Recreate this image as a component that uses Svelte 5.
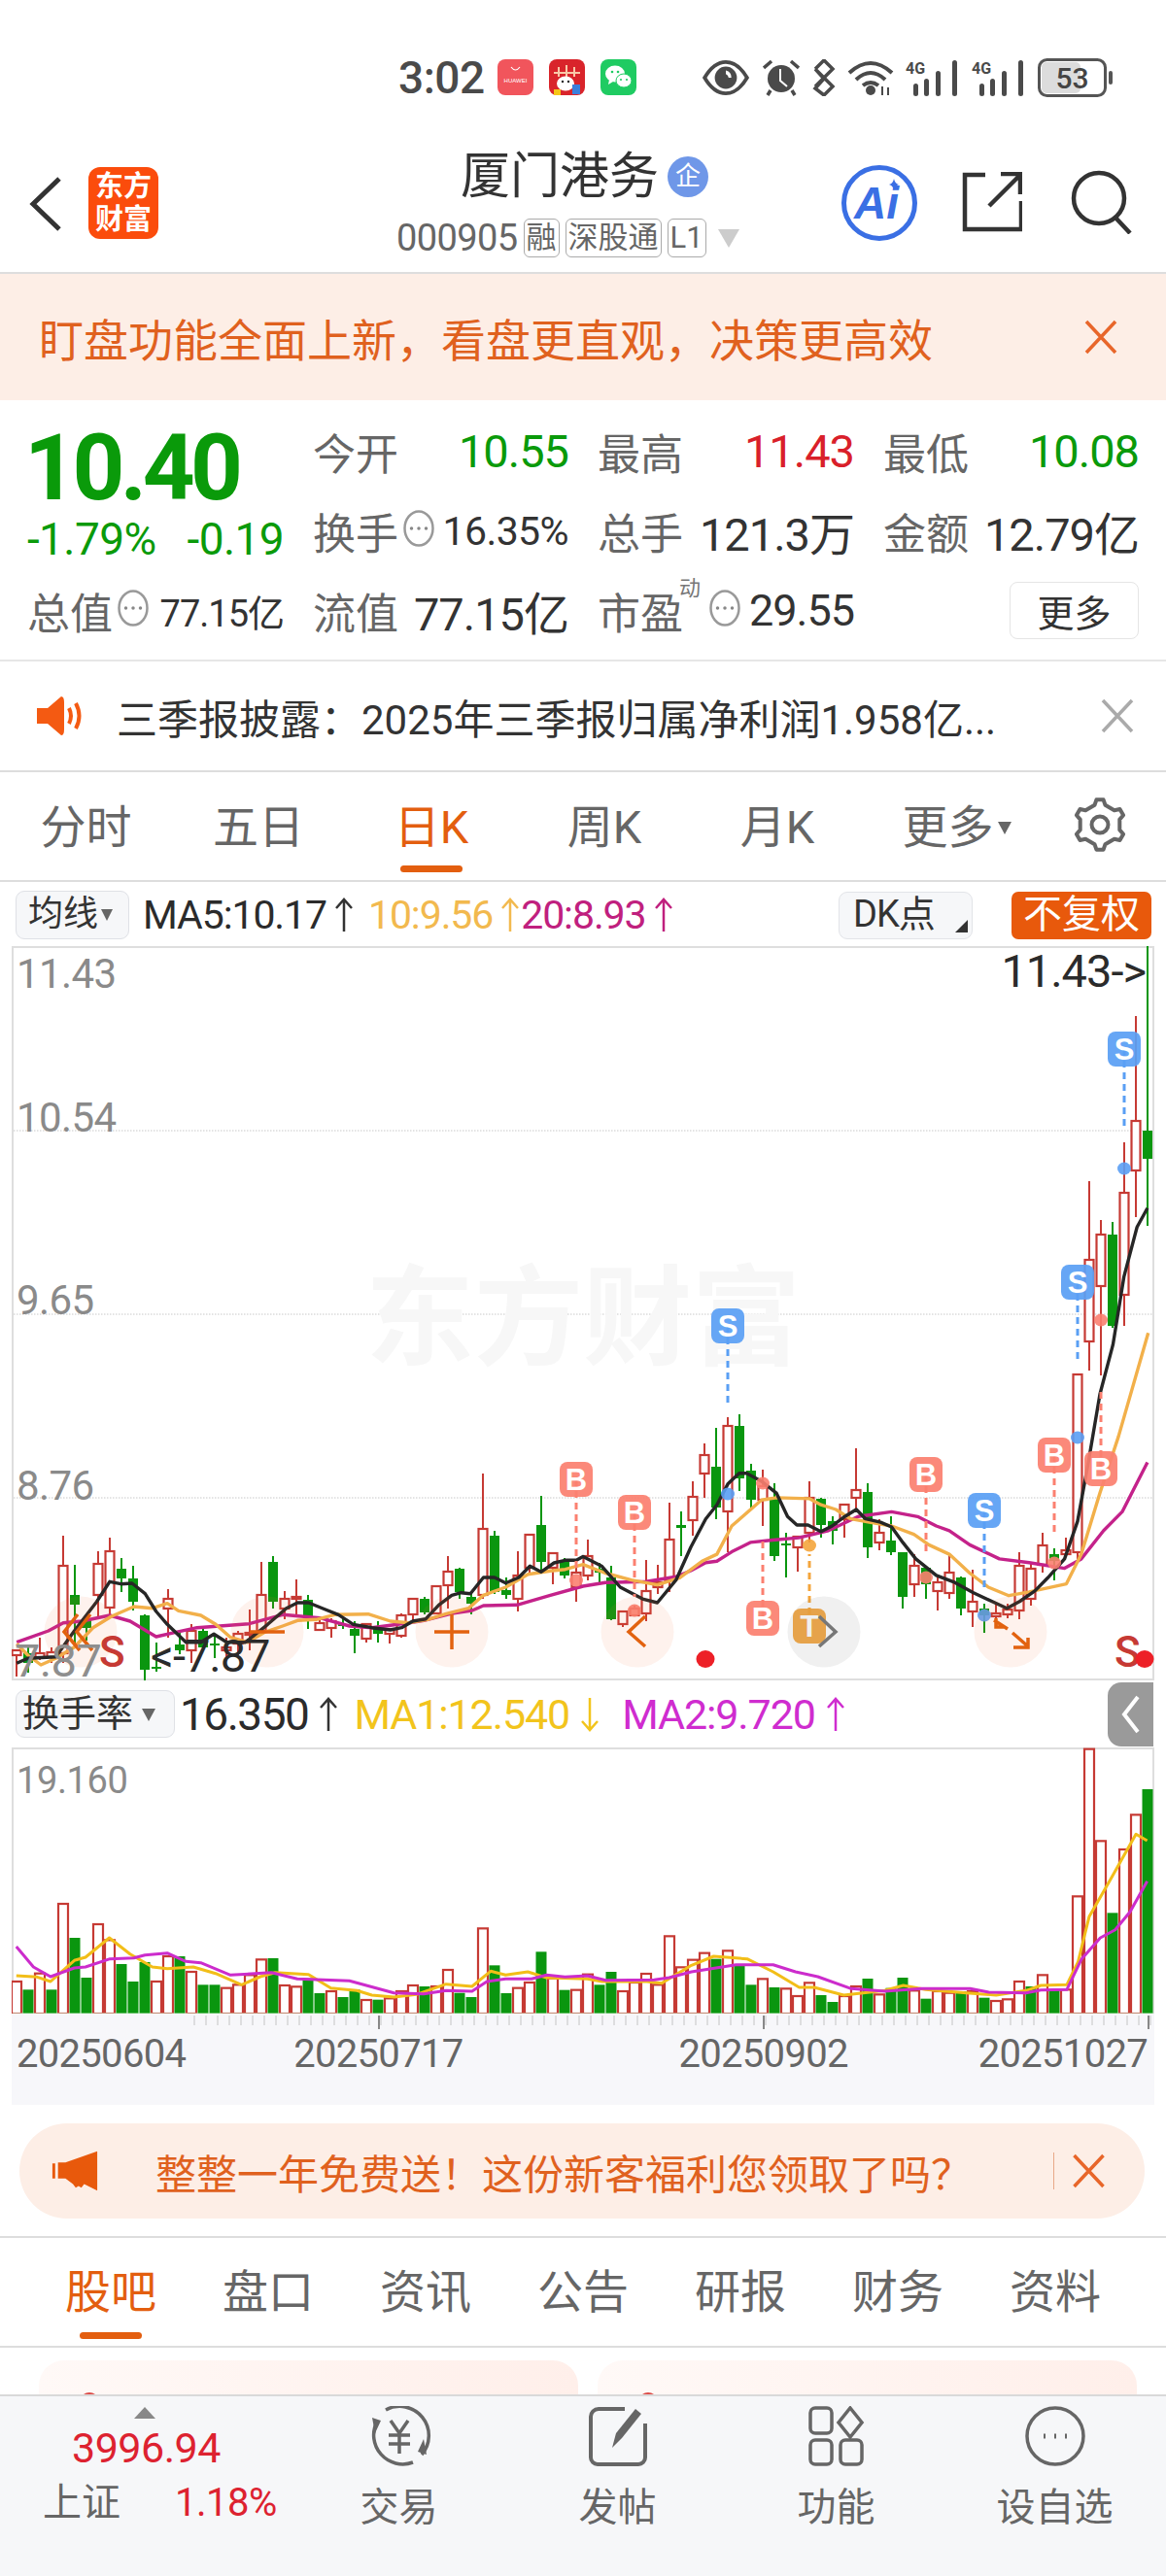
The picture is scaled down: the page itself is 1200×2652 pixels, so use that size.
<script>
  const R = 1, G = 0;
  const candles = [
    [R,1700,1700,1705,1727],[G,1697,1703,1713,1723],[R,1687,1703,1707,1710],[R,1697,1702,1707,1713],
    [R,1582,1613,1703,1713],[G,1612,1643,1653,1697],[G,1663,1667,1677,1690],[R,1598,1611,1643,1668],
    [R,1584,1598,1656,1667],[G,1605,1616,1626,1640],[G,1613,1626,1650,1659],[G,1663,1664,1720,1731],
    [G,1692,1717,1719,1722],[R,1637,1647,1657,1687],[G,1680,1694,1700,1704],[R,1673,1680,1700,1713],
    [G,1678,1680,1697,1700],[G,1683,1693,1695,1708],[R,1687,1697,1700,1707],[R,1680,1683,1693,1705],
    [R,1658,1682,1684,1700],[R,1609,1643,1680,1682],[G,1603,1609,1650,1657],[R,1639,1647,1657,1668],
    [R,1627,1645,1647,1663],[G,1643,1648,1665,1678],[R,1668,1672,1679,1680],[R,1667,1670,1677,1687],
    [G,1668,1673,1675,1678],[G,1670,1678,1685,1703],[R,1672,1673,1688,1692],[G,1670,1678,1683,1692],
    [R,1677,1678,1683,1693],[R,1662,1664,1685,1687],[R,1647,1647,1663,1670],[G,1645,1647,1661,1663],
    [R,1633,1634,1662,1663],[R,1603,1619,1633,1657],[G,1615,1616,1640,1647],[G,1640,1645,1652,1663],
    [R,1518,1575,1643,1647],[G,1577,1582,1640,1642],[G,1625,1638,1643,1647],[R,1598,1623,1647,1660],
    [R,1581,1581,1615,1623],[G,1541,1571,1609,1617],[R,1600,1600,1615,1632],[G,1605,1608,1623,1626],
    [R,1610,1620,1635,1650],[R,1586,1603,1623,1628],[G,1610,1616,1620,1630],[G,1613,1625,1668,1669],
    [R,1659,1660,1673,1676],[R,1654,1657,1664,1665],[R,1607,1639,1662,1670],[R,1612,1630,1635,1642],
    [R,1548,1586,1628,1640],[G,1557,1571,1574,1603],[R,1526,1542,1566,1582],[R,1487,1499,1518,1543],
    [G,1471,1511,1553,1565],[R,1460,1469,1557,1599],[G,1457,1469,1523,1536],[G,1508,1515,1545,1553],
    [R,1514,1531,1545,1572],[G,1528,1543,1603,1608],[G,1579,1590,1592,1625],[R,1582,1583,1594,1619],
    [R,1526,1543,1579,1589],[G,1543,1544,1571,1584],[G,1562,1567,1577,1591],[R,1550,1550,1565,1584],
    [R,1492,1535,1543,1557],[G,1528,1537,1594,1605],[R,1565,1579,1589,1597],[G,1562,1587,1599,1602],
    [G,1599,1599,1645,1657],[R,1601,1613,1632,1645],[G,1613,1615,1632,1647],[R,1625,1630,1639,1659],
    [R,1601,1620,1641,1647],[G,1624,1625,1657,1664],[R,1617,1650,1660,1676],[G,1652,1657,1664,1682],
    [R,1652,1662,1665,1671],[R,1652,1658,1663,1667],[R,1599,1613,1659,1668],[R,1611,1616,1647,1654],
    [R,1579,1592,1612,1620],[G,1595,1601,1608,1628],[R,1584,1597,1601,1604],[R,1416,1416,1599,1606],
    [R,1217,1298,1382,1412],[R,1257,1272,1325,1417],[G,1259,1272,1366,1368],[R,1177,1229,1334,1366],
    [R,1047,1155,1206,1254],[G,975,1165,1194,1263]
  ];
  const cx = (i) => 17 + 12 * i;

  const z8 = (a) => a.map(([x, y]) => [x / 2.613, 1500 + y / 3]);
  const z4 = (a) => a.map(([x, y]) => [600 + x / 2.613, 1000 + y / 2.063]);
  const z5 = (a) => a.map(([x, y]) => [x / 1.307, 1760 + y / 3]);
  const pts = (a) => a.map(([x, y]) => x.toFixed(1) + ',' + y.toFixed(1)).join(' ');

  const ma5 = pts([...z8([[45,640],[75,625],[150,620],[200,540],[260,450],[295,388],[325,395],[355,393],[390,425],[420,480],[450,520],[500,575],[540,575],[575,550],[610,575],[660,575],[720,520],[770,470],[800,453],[830,453],[870,472],[910,490],[950,520],[1000,530],[1050,537],[1080,530],[1110,510],[1145,503],[1180,460],[1215,430],[1240,422],[1265,425],[1300,375],[1330,375],[1360,392],[1395,375],[1425,340],[1455,358],[1490,330],[1520,322],[1550,322]]),
    ...z4([[0,1245],[50,1265],[100,1310],[160,1335],[200,1343],[250,1295],[290,1225],[330,1165],[360,1135],[390,1090],[420,1068],[440,1068],[480,1085],[520,1110],[550,1160],[575,1178],[605,1178],[640,1192],[670,1180],[700,1162],[735,1145],[760,1165],[800,1172],[830,1182],[860,1215],[895,1250],[950,1285],[1000,1300],[1050,1322],[1140,1355],[1175,1340],[1215,1318],[1250,1290],[1295,1250],[1330,1170],[1360,1040],[1390,900],[1425,795],[1455,650],[1490,545],[1518,505]])]);
  const ma10 = pts([...z8([[45,580],[75,615],[110,645],[150,625],[200,590],[250,530],[300,495],[360,465],[410,470],[450,455],[480,478],[540,492],[580,520],[620,560],[665,575],[710,545],[760,525],[800,508],[850,505],[900,490],[990,488],[1050,510],[1100,515],[1150,505],[1200,487],[1260,470],[1300,430],[1360,405],[1420,365],[1480,355],[1520,350]]),
    ...z4([[0,1262],[60,1280],[130,1295],[200,1305],[260,1290],[320,1255],[360,1240],[400,1180],[480,1125],[520,1120],[610,1122],[640,1135],[680,1145],[720,1165],[770,1172],[830,1180],[890,1198],[930,1220],[985,1240],[1040,1280],[1090,1310],[1145,1328],[1200,1320],[1300,1303],[1340,1240],[1390,1110],[1440,990],[1520,770]])]);
  const ma20 = pts([...z8([[45,575],[130,540],[170,515],[220,510],[295,492],[350,510],[420,558],[470,545],[530,530],[670,518],[760,490],[860,500],[940,525],[1000,530],[1100,515],[1140,508],[1220,485],[1270,477],[1300,462],[1390,460],[1480,430]]),
    ...z4([[0,1308],[60,1300],[170,1298],[250,1288],[290,1275],[330,1258],[360,1255],[400,1235],[450,1215],[510,1210],[580,1205],[660,1190],[740,1160],[830,1150],[900,1160],[950,1180],[985,1190],[1040,1220],[1120,1250],[1200,1258],[1295,1270],[1340,1250],[1400,1190],[1450,1150],[1518,1045]])]);

  const gridY = [1165, 1354, 1543];
  const priceLabels = [['11.43',1018],['10.54',1166],['9.65',1354],['8.76',1545]];

  // x, box centre y, tip y, dot y, letter, colour
  const marks = [
    [749,1366,1446,1539,'S','#5a9ff4'],[1013,1556,1640,1664,'S','#5a9ff4'],
    [1109,1321,1402,1481,'S','#5a9ff4'],[1157,1081,1162,1204,'S','#5a9ff4'],
    [593,1524,1617,1628,'B','#fb8070'],[653,1558,1645,1659,'B','#fb8070'],
    [785,1667,1586,1528,'B','#fb8070'],[953,1519,1601,1625,'B','#fb8070'],
    [1085,1499,1582,1610,'B','#fb8070'],[1133,1513,1431,1360,'B','#fb8070'],
    [833,1675,1601,1592,'T','#f4a53c']
  ];
  const rounds = [[83,0],[275,0],[465,0],[656,0],[848,1],[1040,0]];

  const volTops = [840,865,815,865,600,705,828,663,712,786,840,780,840,762,762,810,850,850,860,850,820,772,768,852,856,830,876,870,888,865,897,896,892,870,852,855,855,804,875,888,676,790,876,860,843,748,830,866,866,818,850,810,870,843,816,850,700,796,773,752,770,745,790,850,832,858,862,885,844,882,903,885,855,831,880,860,828,868,893,870,875,870,870,890,900,895,840,855,820,865,865,577,122,406,628,432,325,246];
  const volRed = '1,0,1,0,1,0,0,1,1,0,0,0,1,1,0,1,0,0,1,1,1,1,0,1,1,0,0,1,0,0,1,0,1,1,1,0,1,1,0,0,1,0,0,1,1,0,1,0,1,1,0,0,1,1,1,1,1,1,1,1,0,1,0,0,1,0,1,1,1,0,0,1,1,0,1,0,0,1,0,1,1,0,1,0,1,1,1,0,1,0,1,1,1,1,0,1,1,0'.split(',').map(Number);
  const bars = volTops.map((t, i) => ({ x: cx(i), y: 1760 + t / 3, red: volRed[i] }));
  const volMa1 = pts(z5([[22,822],[50,826],[68,840],[100,775],[115,765],[147,705],[175,755],[205,795],[225,800],[260,795],[290,815],[325,850],[350,825],[370,812],[415,818],[445,860],[480,868],[500,882],[530,888],[560,880],[600,848],[635,855],[660,808],[680,820],[710,810],[735,828],[790,832],[810,840],[870,840],[890,845],[930,790],[960,762],[1005,770],[1040,810],[1075,858],[1095,858],[1135,882],[1190,868],[1215,852],[1245,865],[1300,875],[1340,882],[1380,868],[1400,852],[1435,850],[1450,780],[1465,640],[1495,520],[1528,385],[1543,405]]));
  const volMa2 = pts(z5([[22,732],[45,795],[68,825],[100,798],[115,795],[148,770],[180,767],[195,758],[225,752],[250,778],[270,782],[310,820],[365,812],[400,832],[470,838],[530,875],[570,878],[600,868],[635,870],[655,840],[680,832],[715,832],[735,820],[760,826],[790,822],[815,836],[880,835],[900,828],[930,810],[990,788],[1040,788],[1070,810],[1100,825],[1145,862],[1190,870],[1240,862],[1305,862],[1330,873],[1380,875],[1400,866],[1435,865],[1455,770],[1480,705],[1500,680],[1520,625],[1543,530]]));
  const ticks = Array.from({ length: 83 }, (_, i) => 200 + i * 12);

  const tabs = ['分时','五日','日K','周K','月K'];
  const lowerTabs = ['股吧','盘口','资讯','公告','研报','财务','资料'];
  const gear = (() => {
    const out = [];
    for (let i = 0; i < 6; i++) {
      const a = (i * 60 - 90) * Math.PI / 180;
      [[-15,27],[-8,27],[8,27],[15,27]].forEach(([d, r], j) => {
        const rr = (j === 0 || j === 3) ? 21 : 26;
        const ang = a + d * Math.PI / 180;
        out.push((28 + rr * Math.cos(ang)).toFixed(1) + ',' + (28 + rr * Math.sin(ang)).toFixed(1));
      });
    }
    return out.join(' ');
  })();
  const arrow = 'M11 36V3M3 12l8-9 8 9';
  const arrowDown = 'M11 2v33M3 26l8 9 8-9';
</script>

<div class="page">
  <div class="status">
    <span class="time">3:02</span>
    <svg class="app" viewBox="0 0 37 37"><rect width="37" height="37" rx="8" fill="#f1555c"/><path d="M14 8q4.500 6 9 0" fill="none" stroke="#fff" stroke-width="1.200"/><text x="18.500" y="24" class="tiny">HUAWEI</text></svg>
    <svg class="app" viewBox="0 0 37 37"><rect width="37" height="37" rx="8" fill="#d9242b"/><path d="M5 14h27M10 8v10M18 6v12M26 8v10" stroke="#f8c8a8" stroke-width="2"/><ellipse cx="17" cy="25" rx="9" ry="7.500" fill="#fff"/><circle cx="14" cy="23" r="1.200" fill="#222"/><circle cx="20" cy="23" r="1.200" fill="#222"/><rect x="5" y="31" width="7" height="6" fill="#f5c518"/><rect x="24" y="26" width="8" height="10" fill="#3b7fdd"/></svg>
    <svg class="app" viewBox="0 0 37 37"><rect width="37" height="37" rx="8" fill="#1fcb62"/><ellipse cx="15" cy="15" rx="10" ry="8.500" fill="#fff"/><path d="M9 21l-1 5 5-3z" fill="#fff"/><ellipse cx="24" cy="22" rx="8" ry="7" fill="#fff" stroke="#1fcb62"/><circle cx="12" cy="13" r="1.300" fill="#1fcb62"/><circle cx="18" cy="13" r="1.300" fill="#1fcb62"/><circle cx="21" cy="21" r="1.100" fill="#1fcb62"/><circle cx="27" cy="21" r="1.100" fill="#1fcb62"/></svg>
    <svg class="s eye" viewBox="0 0 50 40"><path d="M2 20Q12 3 25 3t23 17Q38 37 25 37T2 20z" fill="none" stroke="#4a4a4a" stroke-width="4"/><circle cx="25" cy="20" r="12" fill="#4a4a4a"/><path d="M25 12a8 8 0 0 1 6 8h-3a5 5 0 0 0-3-4z" fill="#fff"/></svg>
    <svg class="s alarm" viewBox="0 0 38 38"><circle cx="19" cy="20" r="14" fill="#4a4a4a"/><path d="M18 10v12l7 6" fill="none" stroke="#fff" stroke-width="2"/><path d="M9 2L1 9M29 2l8 7M8 32l-3 5M30 32l3 5" stroke="#4a4a4a" stroke-width="3.500"/></svg>
    <svg class="s bt" viewBox="0 0 24 38"><path d="M3 10l9 10-9 10 9 7 9-9L3 10M3 28L21 10 12 1 3 10" fill="none" stroke="#4a4a4a" stroke-width="3.500"/></svg>
    <svg class="s wifi" viewBox="0 0 48 38"><path d="M2 14Q24-6 46 14M9 21Q24 7 39 21M16 27q8-6 16 0" fill="none" stroke="#4a4a4a" stroke-width="4"/><circle cx="24" cy="32" r="5" fill="#4a4a4a"/><path d="M36 28v9M42 29v8" stroke="#4a4a4a" stroke-width="2"/></svg>
    <svg class="s sig" viewBox="0 0 55 38"><text x="0" y="15" class="g4">4G</text><rect x="8" y="25" width="5" height="13" rx="2.500"/><rect x="19" y="20" width="5" height="18" rx="2.500"/><rect x="31" y="12" width="5" height="26" rx="2.500"/><rect x="48" y="1" width="5" height="37" rx="2.500"/></svg>
    <svg class="s sig2" viewBox="0 0 55 38"><text x="0" y="15" class="g4">4G</text><rect x="8" y="25" width="5" height="13" rx="2.500"/><rect x="19" y="20" width="5" height="18" rx="2.500"/><rect x="31" y="12" width="5" height="26" rx="2.500"/><rect x="48" y="1" width="5" height="37" rx="2.500"/></svg>
    <svg class="s batt" viewBox="0 0 78 40"><rect x="1.500" y="1.500" width="68" height="37" rx="8" fill="#fff" stroke="#555" stroke-width="3"/><rect x="4" y="4" width="40" height="32" rx="5" fill="#dcdcdc"/><text x="35.500" y="31" class="bt-t">53</text><rect x="73" y="13" width="4" height="14" rx="2" fill="#555"/></svg>
  </div>

  <header class="head">
    <svg class="back" viewBox="0 0 34 58"><path d="M31 3L4 29l27 26" fill="none" stroke="#333" stroke-width="5"/></svg>
    <div class="logo">东方<br/>财富</div>
    <div class="title">
      <div class="name">厦门港务<span class="qi">企</span></div>
      <div class="code">000905<span class="tag">融</span><span class="tag">深股通</span><span class="tag">L1</span><i class="tri"></i></div>
    </div>
    <svg class="ai" viewBox="0 0 80 80"><circle cx="40" cy="40" r="36.500" fill="none" stroke="#3a6fe4" stroke-width="5"/><text x="37" y="56" class="ai-t">Ai</text><path d="M55 15q1 5 5 6-4 1-5 6-1-5-5-6 4-1 5-6z" fill="#3a6fe4"/></svg>
    <svg class="share" viewBox="0 0 62 62"><path d="M24 3H3v56h58V30M28 35L60 3M40 2h20v21" fill="none" stroke="#333" stroke-width="4.500"/></svg>
    <svg class="search" viewBox="0 0 64 66"><circle cx="29" cy="29" r="26" fill="none" stroke="#333" stroke-width="4.500"/><path d="M46 49l15 16" stroke="#333" stroke-width="4.500"/></svg>
  </header>

  <div class="promo">
    <span>盯盘功能全面上新，看盘更直观，决策更高效</span>
    <svg class="x" viewBox="0 0 34 36"><path d="M2 2l30 32M32 2L2 34" stroke="#e8662a" stroke-width="3.500"/></svg>
  </div>

  <section class="quote">
    <div class="big">10.40</div>
    <div class="cell"><span class="lb">今开</span><span class="val green">10.55</span></div>
    <div class="cell"><span class="lb">最高</span><span class="val red">11.43</span></div>
    <div class="cell"><span class="lb">最低</span><span class="val green">10.08</span></div>
    <div class="chg"><span>-1.79%</span><span>-0.19</span></div>
    <div class="cell"><span class="lb">换手</span><svg class="dots" viewBox="0 0 32 38"><ellipse cx="16" cy="19" rx="14.500" ry="17.500" fill="none" stroke="#999" stroke-width="2.500"/><path d="M8.500 19h.01M16 19h.01M23.500 19h.01" stroke="#888" stroke-width="3.500" stroke-linecap="round"/></svg><span class="val small">16.35%</span></div>
    <div class="cell"><span class="lb">总手</span><span class="val">121.3万</span></div>
    <div class="cell"><span class="lb">金额</span><span class="val">12.79亿</span></div>
    <div class="cell"><span class="lb">总值</span><svg class="dots" viewBox="0 0 32 38"><ellipse cx="16" cy="19" rx="14.500" ry="17.500" fill="none" stroke="#999" stroke-width="2.500"/><path d="M8.500 19h.01M16 19h.01M23.500 19h.01" stroke="#888" stroke-width="3.500" stroke-linecap="round"/></svg><span class="val xs">77.15亿</span></div>
    <div class="cell"><span class="lb">流值</span><span class="val">77.15亿</span></div>
    <div class="cell"><span class="lb">市盈</span><sup class="dong">动</sup><svg class="dots" viewBox="0 0 32 38"><ellipse cx="16" cy="19" rx="14.500" ry="17.500" fill="none" stroke="#999" stroke-width="2.500"/><path d="M8.500 19h.01M16 19h.01M23.500 19h.01" stroke="#888" stroke-width="3.500" stroke-linecap="round"/></svg><span class="val pe">29.55</span></div>
    <div class="cell end"><button class="more">更多</button></div>
  </section>

  <div class="notice">
    <svg class="speaker" viewBox="0 0 50 42"><path d="M1 13h11L26 1q3 0 3 6v28q0 6-3 6L12 29H1z" fill="#f45a12"/><path d="M34 13q4 8 0 16M41 8q7 13 0 26" fill="none" stroke="#f45a12" stroke-width="4"/></svg>
    <span class="ntext">三季报披露：2025年三季报归属净利润1.958亿...</span>
    <svg class="nx" viewBox="0 0 34 36"><path d="M2 2l30 32M32 2L2 34" stroke="#aaa" stroke-width="3.500"/></svg>
  </div>

  <nav class="tabs">
    {#each tabs as t, i}
      <div class="tab" class:on={i === 2}>{t}</div>
    {/each}
    <div class="tab moretab">更多<i class="tri dark"></i></div>
    <div class="tab gearcell"><svg class="gear" viewBox="0 0 56 56"><polygon points={gear} fill="none" stroke="#666" stroke-width="4" stroke-linejoin="round"/><circle cx="28" cy="28" r="8.500" fill="none" stroke="#666" stroke-width="4"/></svg></div>
  </nav>

  <div class="legend">
    <div class="sel">均线<i class="tri dark s2"></i></div>
    <span class="lt ink">MA5:10.17<svg class="up" viewBox="0 0 22 38"><path d={arrow} fill="none" stroke="#333" stroke-width="2.500"/></svg></span>
    <span class="lt amber">10:9.56<svg class="up" viewBox="0 0 22 38"><path d={arrow} fill="none" stroke="#f2b94e" stroke-width="2.500"/></svg></span>
    <span class="lt plum">20:8.93<svg class="up" viewBox="0 0 22 38"><path d={arrow} fill="none" stroke="#c0207e" stroke-width="2.500"/></svg></span>
    <div class="dk">DK点<i class="corner"></i></div>
    <div class="fq">不复权</div>
  </div>

  <svg class="main" viewBox="12 975 1176 756">
    <rect x="13" y="976" width="1174" height="754" fill="#fff"/>
    <path d="M13 975v756M12 976h1176M12 1730h1176M1187 975v756" fill="none" stroke="#dedede" stroke-width="2"/>
    {#each gridY as y}
      <line x1="14" x2="1186" y1={y} y2={y} stroke="#c8c8c8" stroke-width="1" stroke-dasharray="1.500 1.500"/>
    {/each}
    <text x="600" y="1398" class="wm">东方财富</text>
    {#each priceLabels as [t, y]}
      <text x="17" {y} class="pl">{t}</text>
    {/each}
    {#each candles as [red, h, t, b, l], i}
      {#if red}
        <line x1={cx(i)} x2={cx(i)} y1={h} y2={t} class="wr"/>
        <line x1={cx(i)} x2={cx(i)} y1={b} y2={l} class="wr"/>
        <rect x={cx(i) - 4.500} y={t} width="9" height={Math.max(b - t, 2)} fill="#fff" stroke="#c63a34" stroke-width="2.200"/>
      {:else}
        <line x1={cx(i)} x2={cx(i)} y1={h} y2={l} class="wg"/>
        <rect x={cx(i) - 5} y={t} width="10" height={Math.max(b - t, 2)} fill="#0a960f"/>
      {/if}
    {/each}
    <polyline points={ma20} class="ln" stroke="#c4228a" stroke-width="3.400"/>
    <polyline points={ma10} class="ln" stroke="#f2b04a" stroke-width="3.400"/>
    <polyline points={ma5} class="ln" stroke="#262626" stroke-width="3.400"/>
    {#each marks as [x, y, tip, dot, ch, col]}
      <line x1={x} x2={x} y1={y} y2={tip} stroke={col} stroke-width="3" stroke-dasharray="7 5"/>
      <ellipse cx={x} cy={dot} rx="7" ry="6.500" fill={col} opacity=".9"/>
      <rect x={x - 17} y={y - 18} width="34" height="36" rx="8" fill={col} opacity=".93"/>
      <text {x} y={y + 11} class="mk">{ch}</text>
    {/each}
    {#each rounds as [x, grey]}
      <ellipse cx={x} cy="1681" rx="37.500" ry="36.500" fill={grey ? 'rgba(90,90,90,.09)' : 'rgba(240,110,50,.09)'}/>
    {/each}
    <path d="M80 1663L66 1681l16 19M93 1663L79 1681l16 19" class="gl"/>
    <path d="M257 1681h36M447 1681h36M465 1663v36" class="gl"/>
    <path d="M664 1665l-17 16 17 15" class="gl"/>
    <path d="M843 1665l17 16-17 15" class="gl" style="stroke:#777"/>
    <path d="M1023 1669l14 9M1025 1667v9h9M1058 1687v10h-15M1042 1682l16 14" class="gl"/>
    <text x="15" y="1727" class="pl g2">7.87</text>
    <text x="102" y="1717" class="bigS">S</text>
    <text x="155" y="1722" class="dk-l">&lt;-7.87</text>
    <text x="1179" y="1017" class="dk-l end">11.43-&gt;</text>
    <text x="1147" y="1717" class="bigS">S</text>
    <ellipse cx="726" cy="1709" rx="9.500" ry="9" fill="#ed2027"/>
    <ellipse cx="1178" cy="1709" rx="9.500" ry="9" fill="#ed2027"/>
  </svg>

  <div class="legend two">
    <div class="sel wide">换手率<i class="tri dark s3"></i></div>
    <span class="lt ink tight">16.350<svg class="up" viewBox="0 0 22 38"><path d={arrow} fill="none" stroke="#333" stroke-width="2.500"/></svg></span>
    <span class="lt yel">MA1:12.540<svg class="up" viewBox="0 0 22 38"><path d={arrowDown} fill="none" stroke="#f2c41c" stroke-width="2.500"/></svg></span>
    <span class="lt mag">MA2:9.720<svg class="up" viewBox="0 0 22 38"><path d={arrow} fill="none" stroke="#cf2ccf" stroke-width="2.500"/></svg></span>
    <div class="fold"><svg viewBox="0 0 20 40"><path d="M17 2L3 20l14 18" fill="none" stroke="#fff" stroke-width="4"/></svg></div>
  </div>

  <svg class="vol" viewBox="12 1799 1176 276">
    <path d="M13 1800v273M12 1800h1176M1187 1800v273" fill="none" stroke="#dedede" stroke-width="2"/>
    <text x="17" y="1846" class="pl vl">19.160</text>
    {#each bars as b}
      {#if b.red}
        <rect x={b.x - 5} y={b.y} width="10" height={2073 - b.y} fill="#fff" stroke="#c63a34" stroke-width="2.200"/>
      {:else}
        <rect x={b.x - 5.500} y={b.y} width="11" height={2073 - b.y} fill="#0a960f"/>
      {/if}
    {/each}
    <polyline points={volMa1} class="ln" stroke="#f2be18" stroke-width="3"/>
    <polyline points={volMa2} class="ln" stroke="#cc2ccc" stroke-width="3"/>
    <line x1="13" x2="1187" y1="2073.500" y2="2073.500" stroke="#c3ecc3" stroke-width="2"/>
  </svg>

  <div class="axis">
    <svg class="tk" viewBox="12 2074 1176 16">
      {#each ticks as x}
        <line x1={x} x2={x} y1="2076" y2="2086" stroke="#c4c4c4"/>
      {/each}
      <path d="M390 2076v14M786 2076v14M1182 2076v14" stroke="#888" stroke-width="2"/>
    </svg>
    <div class="dates"><span>20250604</span><span class="d2">20250717</span><span class="d3">20250902</span><span class="d4">20251027</span></div>
  </div>

  <div class="ad-wrap">
    <div class="ad">
      <svg class="horn" viewBox="0 0 52 44"><path d="M2 14h3v16H2zM8 13h8L50 1v42L36 36l-3 4-3-2-3 2-3-4-8-6H8z" fill="#e8590c"/></svg>
      <span class="adt">整整一年免费送！这份新客福利您领取了吗？</span>
      <i class="sep"></i>
      <svg class="adx" viewBox="0 0 34 36"><path d="M2 2l30 32M32 2L2 34" stroke="#e8662a" stroke-width="3.500"/></svg>
    </div>
  </div>

  <nav class="tabs lower">
    {#each lowerTabs as t, i}
      <div class="tab" class:on={i === 0}>{t}</div>
    {/each}
  </nav>

  <div class="cards">
    <div class="card"><i class="ball"></i></div>
    <div class="card"><i class="ball"></i></div>
  </div>

  <footer class="bar">
    <div class="idx">
      <i class="upt"></i>
      <div class="ipx">3996.94</div>
      <div class="irow"><span>上证</span><b>1.18%</b></div>
    </div>
    <div class="act">
      <svg viewBox="0 0 72 62"><path d="M22 4a30 30 0 0 1 37 46M50 58A30 30 0 0 1 13 16" fill="none" stroke="#666" stroke-width="3.500"/><path d="M8 12l3 16 6-13zM64 50l-3-16-6 13z" fill="#666"/><path d="M27 15l9 13 9-13M25 30h22M25 39h22M36 28v21" fill="none" stroke="#666" stroke-width="3.500"/></svg>
      <span>交易</span>
    </div>
    <div class="act">
      <svg viewBox="0 0 62 62"><path d="M38 3H11a8 8 0 0 0-8 8v42a7 7 0 0 0 7 7h42a7 7 0 0 0 7-7V18" fill="none" stroke="#666" stroke-width="4"/><path d="M25 43l4-15 20-25 6 5-20 25z" fill="#666"/></svg>
      <span>发帖</span>
    </div>
    <div class="act">
      <svg viewBox="0 0 58 62"><rect x="2" y="2" width="22" height="26" rx="5" fill="none" stroke="#666" stroke-width="3.500"/><path d="M43 2l12 15-12 15-12-15z" fill="none" stroke="#666" stroke-width="3.500"/><rect x="2" y="35" width="22" height="25" rx="5" fill="none" stroke="#666" stroke-width="3.500"/><rect x="33" y="35" width="22" height="25" rx="5" fill="none" stroke="#666" stroke-width="3.500"/></svg>
      <span>功能</span>
    </div>
    <div class="act">
      <svg viewBox="0 0 62 62"><circle cx="31" cy="31" r="29" fill="none" stroke="#666" stroke-width="3.500"/><path d="M19 31h2M30 31h2M41 31h2" stroke="#666" stroke-width="5"/></svg>
      <span>设自选</span>
    </div>
  </footer>
</div>

<style>
  :global(body) { margin: 0; background: #fff; }
  * { box-sizing: border-box; }
  .page {
    width: 1200px; height: 2652px; overflow: hidden; display: flex; flex-direction: column;
    font-family: Roboto, "Noto Sans CJK SC", sans-serif; color: #333; background: #fff;
  }
  i { display: inline-block; font-style: normal; }

  .status { height: 120px; padding: 39px 0 0 410px; display: flex; align-items: center; flex: none; }
  .time { font-size: 46px; font-weight: 500; color: #4a4a4a; letter-spacing: -.5px; width: 100px; }
  .app { width: 37px; height: 37px; margin-right: 16px; flex: none; }
  .app:nth-of-type(1) { margin-left: 2px; }
  .tiny { font: 6px "Liberation Sans", sans-serif; fill: #fff; text-anchor: middle; }
  .s { flex: none; height: 38px; }
  .eye { width: 50px; margin-left: 51px; }
  .alarm { width: 38px; margin-left: 13px; }
  .bt { width: 24px; margin-left: 13px; }
  .wifi { width: 48px; margin-left: 12px; }
  .sig { width: 55px; margin-left: 12px; fill: #4a4a4a; }
  .sig2 { width: 55px; margin-left: 13px; fill: #4a4a4a; }
  .g4 { font: 700 16px Roboto, sans-serif; fill: #4a4a4a; }
  .batt { width: 78px; height: 40px; margin-left: 13px; }
  .bt-t { font: 500 30px Roboto, sans-serif; fill: #444; text-anchor: middle; }

  .head { height: 162px; flex: none; border-bottom: 2px solid #ddd; display: flex; align-items: flex-start; position: relative; padding-left: 30px; }
  .back { width: 34px; height: 58px; margin-top: 61px; flex: none; }
  .logo { width: 72px; height: 74px; margin: 52px 0 0 27px; border-radius: 12px; background: #fb4c0c; color: #fff; font-size: 29px; font-weight: 700; line-height: 34px; text-align: center; padding-top: 3px; flex: none; }
  .title { width: 695px; margin-left: 7px; display: flex; flex-direction: column; align-items: flex-start; padding-left: 238px; flex: none; }
  .name { font-size: 51px; line-height: 60px; margin: 32px 0 0 66px; color: #333; white-space: nowrap; display: flex; align-items: center; }
  .qi { width: 42px; height: 42px; margin-left: 9px; border-radius: 50%; background: #6f97e8; color: #fff; font-size: 26px; line-height: 40px; text-align: center; }
  .code { font-size: 38px; line-height: 44px; margin-top: 11px; color: #666; display: flex; align-items: center; white-space: nowrap; letter-spacing: -.6px; }
  .tag { margin-left: 6px; border: 1.500px solid #aaa; border-radius: 6px; font-size: 31px; line-height: 38px; padding: 0 2px; letter-spacing: 0; }
  .tri { width: 0; height: 0; border-left: 11px solid transparent; border-right: 11px solid transparent; border-top: 19px solid #ccc; margin-left: 12px; }
  .tri.dark { border-left-width: 7px; border-right-width: 7px; border-top: 13px solid #666; margin-left: 4px; }
  .tri.s2 { margin-left: 3px; border-left-width: 6px; border-right-width: 6px; border-top-width: 12px; }
  .tri.s3 { margin-left: 9px; }
  .ai { width: 80px; height: 80px; margin-top: 49px; margin-left: 0; flex: none; }
  .ai-t { font: 700 italic 46px "Liberation Sans", sans-serif; fill: #3a6fe4; text-anchor: middle; }
  .share { width: 62px; height: 62px; margin: 57px 0 0 45px; flex: none; }
  .search { width: 64px; height: 66px; margin: 55px 0 0 50px; flex: none; }

  .promo { height: 130px; flex: none; background: #fdeee6; display: flex; align-items: center; justify-content: space-between; padding: 0 50px 0 40px; color: #e0611e; font-size: 46px; }
  .x { width: 34px; height: 36px; }

  .quote { height: 269px; flex: none; border-bottom: 2px solid #e6e6e6; padding: 12px 28px 0 28px; display: grid; grid-template-columns: 264px 263px 264px 263px; column-gap: 30px; grid-template-rows: 81px 83px 81px; }
  .big { color: #0a9a0a; font-size: 94px; font-weight: 700; line-height: 80px; letter-spacing: -4.500px; margin: 18px 0 0 -3px; white-space: nowrap; }
  .chg { display: flex; justify-content: space-between; align-items: center; color: #0a9a0a; font-size: 46px; letter-spacing: -.6px; padding-top: 16px; white-space: nowrap; }
  .cell { display: flex; align-items: center; white-space: nowrap; position: relative; }
  .lb { color: #666; font-size: 44px; }
  .val { margin-left: auto; font-size: 47px; letter-spacing: -1px; color: #333; }
  .val.small { font-size: 41px; letter-spacing: -.6px; }
  .val.xs { font-size: 38px; letter-spacing: -1px; }
  .val.pe { font-size: 45px; }
  .dots { width: 32px; height: 38px; margin: -6px 0 0 5px; flex: none; }
  .dong { font-size: 22px; color: #777; position: absolute; left: 84px; top: 5px; line-height: 26px; }
  .cell .dong + .dots { margin-left: 27px; }
  .green { color: #0a9a0a; }
  .red { color: #d9202a; }
  .end { justify-content: flex-end; padding-top: 0; }
  .more { width: 133px; height: 59px; margin-right: 0; background: #fff; border: 1.500px solid #e5e5e5; border-radius: 8px; font: 38px "Noto Sans CJK SC", sans-serif; color: #333; padding: 0; }

  .notice { height: 114px; flex: none; border-bottom: 2px solid #ddd; display: flex; align-items: center; padding-left: 37px; font-size: 42px; color: #333; white-space: nowrap; }
  .speaker { width: 50px; height: 42px; flex: none; }
  .ntext { margin-left: 33px; width: 1013px; overflow: hidden; }
  .nx { width: 34px; height: 36px; margin-left: 0; flex: none; }

  .tabs { height: 113px; flex: none; border-bottom: 2px solid #ddd; display: flex; font-size: 47px; color: #666; }
  .tab { width: 178px; text-align: center; line-height: 114px; position: relative; white-space: nowrap; }
  .tab:first-child { width: 177px; }
  .tab .tri { vertical-align: 9px; }
  .tab.on { color: #e35e0f; }
  .tab.on::after { content: ""; position: absolute; left: 50%; bottom: 8px; width: 64px; height: 7px; margin-left: -32px; border-radius: 4px; background: #e35e0f; }
  .moretab { padding-left: 13px; }
  .gearcell { width: 130px; display: flex; align-items: center; justify-content: center; padding-bottom: 4px; }
  .gear { width: 56px; height: 56px; }

  .legend { height: 66px; flex: none; display: flex; align-items: center; padding-left: 16px; position: relative; padding-top: 2px; }
  .sel { width: 117px; height: 50px; border: 1.500px solid #dfe1e6; border-radius: 9px; background: #f6f7f9; font-size: 36px; line-height: 46px; color: #333; padding-left: 12px; white-space: nowrap; flex: none; }
  .sel .tri { vertical-align: 5px; }
  .sel.wide { width: 164px; font-size: 38px; padding-left: 6px; }
  .lt { font-size: 41px; letter-spacing: -1.100px; display: inline-flex; align-items: center; white-space: nowrap; margin-left: 14px; }
  .up { width: 22px; height: 38px; margin-left: 7px; }
  .ink { color: #2b2b2b; }
  .amber { color: #f2b94e; margin-left: 14px; }
  .plum { color: #c0207e; margin-left: 0; }
  .dk { margin-left: auto; width: 138px; height: 49px; border: 1.500px solid #e2e4e8; border-radius: 9px; background: #f6f7f9; font-size: 38px; line-height: 45px; padding-left: 14px; color: #333; position: relative; letter-spacing: -1px; }
  .corner { position: absolute; right: 4px; bottom: 6px; width: 0; height: 0; border-left: 13px solid transparent; border-bottom: 13px solid #333; }
  .fq { width: 144px; height: 49px; margin: 0 15px 0 40px; border-radius: 7px; background: #e8590c; color: #fff; font-size: 40px; line-height: 48px; text-align: center; }
  .main { display: block; width: 1176px; height: 756px; margin-left: 12px; flex: none; }
  .wm { font: 700 112px "Noto Sans CJK SC", sans-serif; fill: #f7f7f7; text-anchor: middle; }
  .pl { font: 42px Roboto, sans-serif; fill: #8a8a8a; letter-spacing: -.6px; }
  .g2 { fill: #8e8e8e; font-size: 47px; }
  .vl { font-size: 38px; letter-spacing: -.4px; }
  .wr { stroke: #c63a34; stroke-width: 2; }
  .wg { stroke: #0a960f; stroke-width: 2; }
  .ln { fill: none; stroke-linejoin: round; }
  .mk { font: 700 31px "Liberation Sans", sans-serif; fill: #fff; text-anchor: middle; }
  .gl { fill: none; stroke: #e2620f; stroke-width: 3.500; }
  .bigS { font: 500 44px Roboto, sans-serif; fill: #c63a34; }
  .dk-l { font: 47px Roboto, sans-serif; fill: #2b2b2b; letter-spacing: -1px; }
  .dk-l.end { text-anchor: end; }

  .two { height: 69px; padding-top: 0; }
  .two .sel { height: 49px; }
  .two .lt { font-size: 43px; }
  .two .tight { margin-left: 5px; font-size: 46px; letter-spacing: -1.500px; }
  .two .up { margin-left: 10px; }
  .yel { color: #f2c41c; margin-left: 15px; }
  .mag { color: #cf2ccf; margin-left: 22px; }
  .fold { position: absolute; right: 13px; top: 2px; width: 47px; height: 66px; background: #9a9a9a; border-radius: 14px 0 0 14px; display: flex; align-items: center; justify-content: center; }
  .fold svg { width: 20px; height: 40px; }
  .vol { display: block; width: 1176px; height: 276px; margin: 0 0 0 12px; flex: none; }

  .axis { width: 1176px; height: 94px; margin: -2px 0 0 12px; background: #f7f7fa; flex: none; }
  .tk { display: block; width: 1176px; height: 16px; }
  .dates { display: flex; padding-left: 5px; margin-top: 4px; font-size: 40px; line-height: 44px; color: #666; letter-spacing: -.7px; white-space: nowrap; }
  .d2 { margin-left: 111px; }
  .d3 { margin-left: 222px; }
  .d4 { margin-left: 134px; }

  .ad-wrap { height: 137px; flex: none; padding: 19px 22px 0 20px; border-bottom: 2px solid #ddd; }
  .ad { height: 98px; border-radius: 49px; background: #fdeee6; display: flex; align-items: center; padding-left: 32px; color: #e0611e; font-size: 42px; white-space: nowrap; }
  .horn { width: 50px; height: 44px; flex: none; }
  .adt { margin-left: 58px; width: 924px; }
  .sep { width: 1px; height: 38px; background: #e8a888; flex: none; }
  .adx { width: 35px; height: 36px; margin-left: 18px; flex: none; }

  .lower { height: 113px; padding-left: 33px; }
  .lower .tab, .lower .tab:first-child { width: 162px; line-height: 112px; }
  .lower .tab.on::after { bottom: 7px; }

  .cards { height: 48px; flex: none; overflow: hidden; display: flex; gap: 20px; padding: 13px 30px 0 40px; }
  .card { flex: 1; height: 120px; border-radius: 26px; background: linear-gradient(90deg, #fff9f7, #ffefea); padding: 33px 0 0 42px; }
  .ball { width: 20px; height: 20px; border-radius: 50%; background: #dd4c48; }

  .bar { height: 188px; flex: none; background: #f6f7f9; border-top: 2px solid #d9d9d9; display: flex; }
  .idx { width: 298px; flex: none; position: relative; }
  .upt { position: absolute; left: 138px; top: 11px; width: 0; height: 0; border-left: 11px solid transparent; border-right: 11px solid transparent; border-bottom: 12px solid #888; }
  .ipx { color: #dd2230; font-size: 43px; line-height: 44px; margin: 31px 0 0 74px; letter-spacing: -.5px; }
  .irow { display: flex; align-items: center; padding-left: 44px; font-size: 40px; line-height: 44px; color: #666; margin-top: 13px; }
  .irow b { color: #dd2230; font-weight: 400; margin-left: 56px; letter-spacing: -.5px; }
  .act { width: 225px; flex: none; display: flex; flex-direction: column; align-items: center; font-size: 40px; color: #666; padding-top: 10px; }
  .act svg { height: 62px; width: 72px; }
  .act span { margin-top: 15px; line-height: 56px; white-space: nowrap; }
</style>
